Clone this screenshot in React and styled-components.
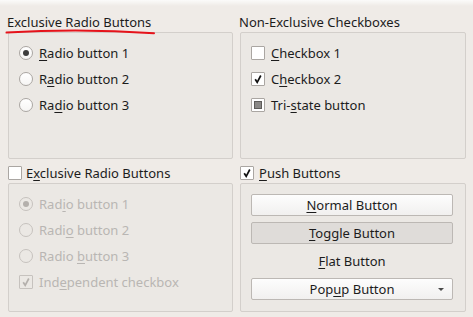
import React from "react";
import styled, { createGlobalStyle, css } from "styled-components";

const Global = createGlobalStyle`
  html, body { margin: 0; padding: 0; background: #efebe7; }
  body { font-family: "Noto Sans", "DejaVu Sans", sans-serif; font-size: 13px; color: #1c1c1c; }
`;

const Page = styled.div`
  position: relative;
  width: 473px;
  height: 317px;
  box-sizing: border-box;
  padding: 12px 7px 0 8px;
  background: linear-gradient(#fbfbfa 0px, #efebe7 6px);
  display: grid;
  grid-template-columns: 225px 226px;
  grid-template-rows: 147px 149px;
  column-gap: 7px;
  row-gap: 4px;
`;

const Group = styled.section`
  display: flex;
  flex-direction: column;
`;

const Title = styled.div`
  height: 20px;
  display: flex;
  align-items: center;
  gap: ${(p) => (p.$gap ? p.$gap : 0)}px;
  white-space: nowrap;
  padding-left: ${(p) => (p.$indent ? p.$indent : 0)}px;
  margin-left: ${(p) => (p.$shift ? p.$shift : 0)}px;
`;

const Frame = styled.div`
  flex: 1;
  box-sizing: border-box;
  border: 1px solid #d3cfcb;
  border-radius: 2px;
  background: #ebe8e4;
  display: flex;
  flex-direction: column;
  padding: ${(p) => p.$pad || "7px 10px 0 10px"};
  gap: ${(p) => (p.$gap ? p.$gap : 0)}px;
`;

const Option = styled.div`
  height: 26px;
  display: flex;
  align-items: center;
  gap: 6px;
  white-space: nowrap;
  color: ${(p) => (p.$disabled ? "#b9b6b3" : "#1c1c1c")};
`;

const Mn = styled.span`
  text-decoration: underline;
  text-underline-offset: 2px;
`;

const RadioCircle = styled.span`
  box-sizing: border-box;
  width: 14px;
  height: 14px;
  border-radius: 50%;
  flex: none;
  display: flex;
  align-items: center;
  justify-content: center;
  border: 1px solid ${(p) => (p.$disabled ? "#c6c2be" : "#aaa6a2")};
  background: ${(p) => (p.$disabled ? "#ebe8e4" : "linear-gradient(#ffffff, #f6f5f4)")};
  &::after {
    content: "";
    display: ${(p) => (p.$checked ? "block" : "none")};
    width: 6px;
    height: 6px;
    border-radius: 50%;
    background: ${(p) => (p.$disabled ? "#b4b0ac" : "#3d3d3d")};
  }
`;

const Box = styled.span`
  box-sizing: border-box;
  width: 14px;
  height: 14px;
  flex: none;
  display: flex;
  align-items: center;
  justify-content: center;
  border: 1px solid ${(p) => (p.$disabled ? "#c6c2be" : "#aaa6a2")};
  border-radius: 1px;
  background: ${(p) => (p.$disabled ? "#ebe8e4" : "#ffffff")};
`;

const TriMark = styled.span`
  width: 6px;
  height: 6px;
  background: #8a8886;
  border: 1px solid #5e5c5a;
`;

const Check = ({ color = "#111" }) => (
  <svg width="10" height="10" viewBox="0 0 10 10">
    <path d="M2.2 5.2 L4.2 8.3 L7.8 1.5" fill="none" stroke={color} strokeWidth="1.7" strokeLinejoin="miter" />
  </svg>
);

const Button = styled.div`
  box-sizing: border-box;
  height: 22px;
  display: flex;
  align-items: center;
  justify-content: center;
  position: relative;
  border-radius: 2px;
  white-space: nowrap;
  ${(p) =>
    p.$variant === "flat"
      ? css`
          border: 1px solid transparent;
          background: transparent;
        `
      : p.$variant === "toggle"
      ? css`
          border: 1px solid #bcb8b4;
          background: #dfdcd9;
        `
      : css`
          border: 1px solid #bcb8b4;
          background: linear-gradient(#fdfdfd, #f1f0ef);
        `}
`;

const Arrow = styled.span`
  position: absolute;
  right: 8px;
  top: 9px;
  width: 0;
  height: 0;
  border-left: 3.5px solid transparent;
  border-right: 3.5px solid transparent;
  border-top: 3.5px solid #4a4a4a;
`;

const Scribble = styled.svg`
  position: absolute;
  left: 0;
  top: 24px;
  pointer-events: none;
`;

export default function App() {
  return (
    <>
      <Global />
      <Page>
        <Group>
          <Title $shift={-1}>Exclusive Radio Buttons</Title>
          <Frame>
            <Option>
              <RadioCircle $checked />
              <span>
                <Mn>R</Mn>adio button 1
              </span>
            </Option>
            <Option>
              <RadioCircle />
              <span>
                R<Mn>a</Mn>dio button 2
              </span>
            </Option>
            <Option>
              <RadioCircle />
              <span>
                Ra<Mn>d</Mn>io button 3
              </span>
            </Option>
          </Frame>
        </Group>

        <Group>
          <Title $shift={-1}>Non-Exclusive Checkboxes</Title>
          <Frame>
            <Option>
              <Box />
              <span>
                <Mn>C</Mn>heckbox 1
              </span>
            </Option>
            <Option>
              <Box>
                <Check />
              </Box>
              <span>
                C<Mn>h</Mn>eckbox 2
              </span>
            </Option>
            <Option>
              <Box>
                <TriMark />
              </Box>
              <span>
                Tri-<Mn>s</Mn>tate button
              </span>
            </Option>
          </Frame>
        </Group>

        <Group>
          <Title $gap={4}>
            <Box />
            <span>
              E<Mn>x</Mn>clusive Radio Buttons
            </span>
          </Title>
          <Frame>
            <Option $disabled>
              <RadioCircle $checked $disabled />
              <span>
                Rad<Mn>i</Mn>o button 1
              </span>
            </Option>
            <Option $disabled>
              <RadioCircle $disabled />
              <span>
                Radi<Mn>o</Mn> button 2
              </span>
            </Option>
            <Option $disabled>
              <RadioCircle $disabled />
              <span>
                Radio <Mn>b</Mn>utton 3
              </span>
            </Option>
            <Option $disabled>
              <Box $disabled>
                <Check color="#b4b0ac" />
              </Box>
              <span>
                Ind<Mn>e</Mn>pendent checkbox
              </span>
            </Option>
          </Frame>
        </Group>

        <Group>
          <Title $gap={5}>
            <Box>
              <Check />
            </Box>
            <span>
              <Mn>P</Mn>ush Buttons
            </span>
          </Title>
          <Frame $pad="10px 12px 0 10px" $gap={6}>
            <Button>
              <span>
                <Mn>N</Mn>ormal Button
              </span>
            </Button>
            <Button $variant="toggle">
              <span>
                <Mn>T</Mn>oggle Button
              </span>
            </Button>
            <Button $variant="flat">
              <span>
                <Mn>F</Mn>lat Button
              </span>
            </Button>
            <Button>
              <span>
                Pop<Mn>u</Mn>p Button
              </span>
              <Arrow />
            </Button>
          </Frame>
        </Group>

        <Scribble width="160" height="14" viewBox="0 24 160 14">
          <path d="M6.5 32.6 Q 80 28.2 154 33.2" fill="none" stroke="#e5131b" strokeWidth="2" strokeLinecap="round" />
        </Scribble>
      </Page>
    </>
  );
}
